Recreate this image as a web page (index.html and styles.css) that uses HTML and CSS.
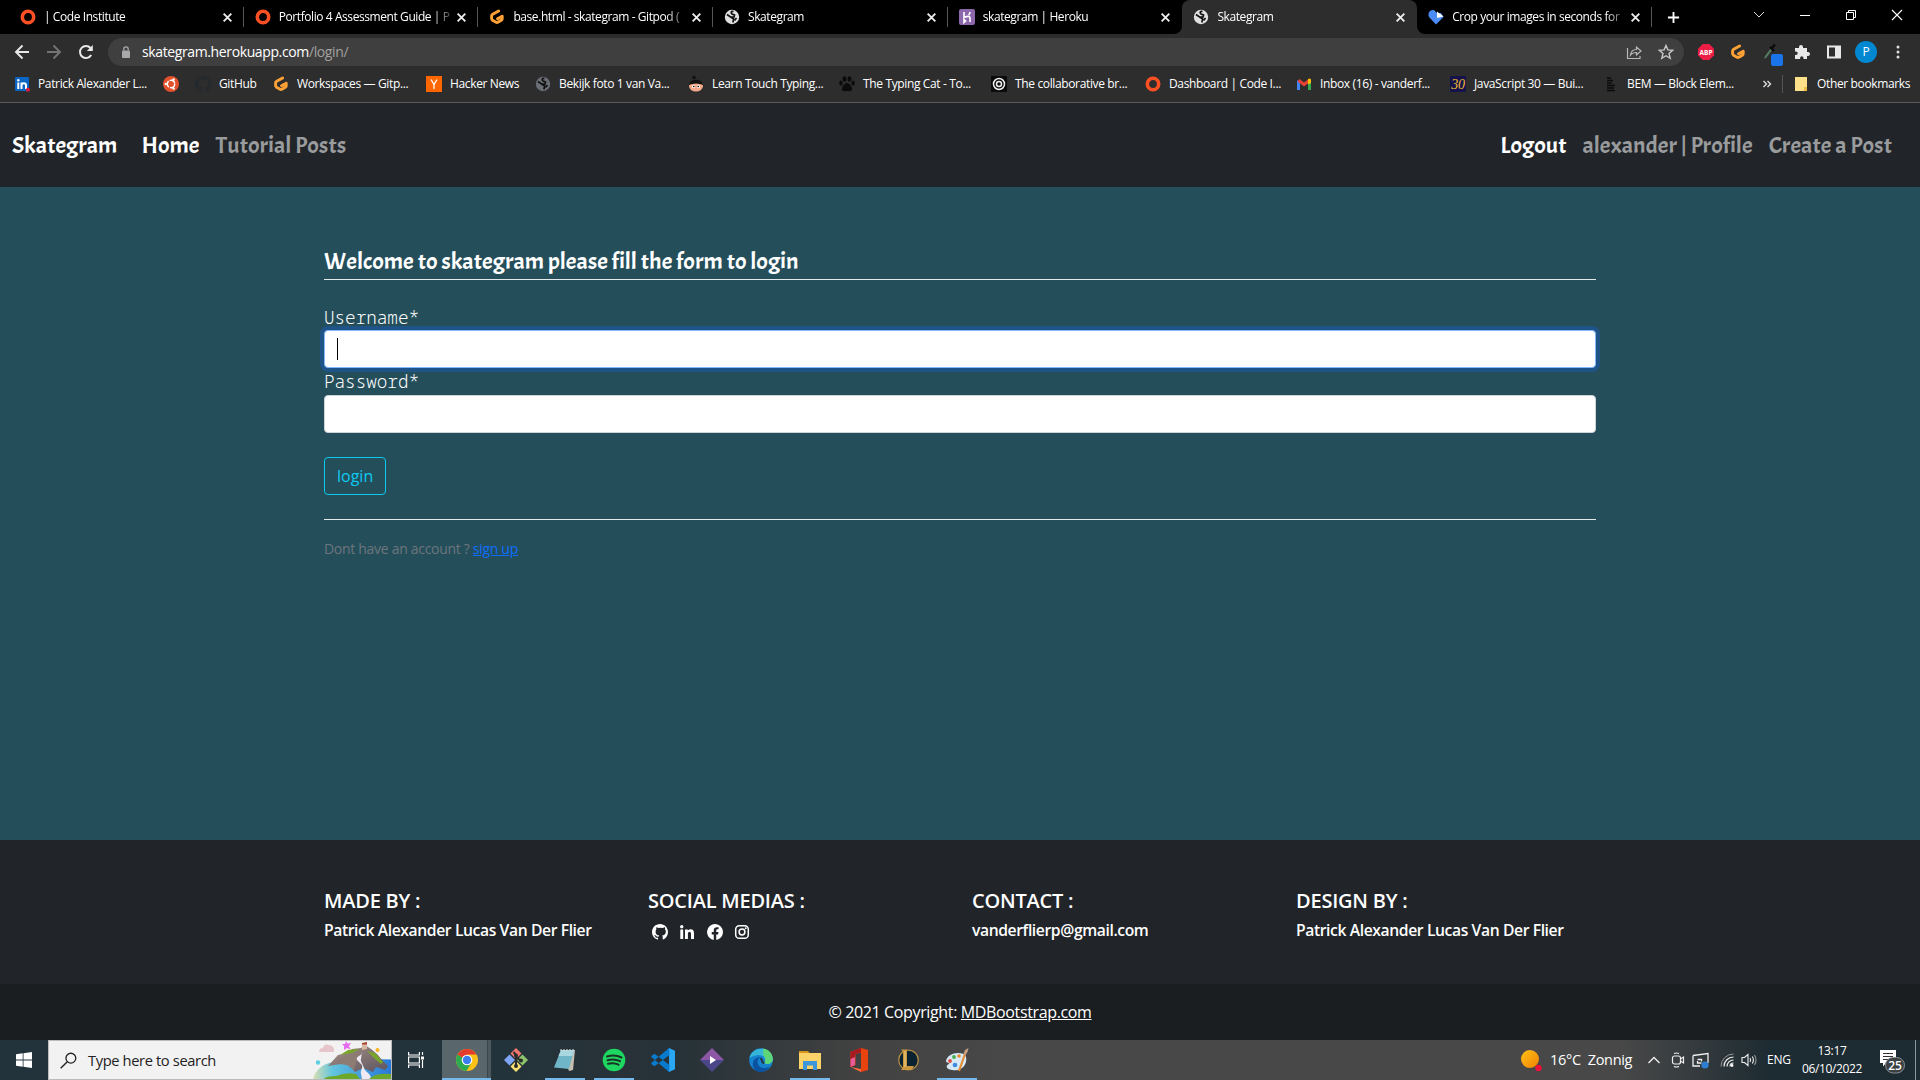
FILE: index.html
```html
<!DOCTYPE html>
<html lang="en">
<head>
<meta charset="utf-8">
<title>Skategram</title>
<link rel="stylesheet" href="styles.css">
</head>
<body>
<svg class="sprite" aria-hidden="true">
  <symbol id="ring" viewBox="0 0 16 16"><ellipse cx="8" cy="8" rx="5.7" ry="5.8" fill="none" stroke="#ff5024" stroke-width="3.6"/></symbol>
  <symbol id="gitpod" viewBox="0 0 16 16"><path d="M9.6 1.900 3.700 5.200Q2.600 5.900 2.600 7v2.600q0 1 .9 1.600l3.600 2.100q.9.500 1.800 0l3.400-2q.9-.5.9-1.600V7.200L8.600 9.800" fill="none" stroke="#ffa236" stroke-width="2.900" stroke-linecap="round" stroke-linejoin="round"/></symbol>
  <symbol id="globe" viewBox="0 0 16 16"><circle cx="8" cy="8" r="7.200" fill="currentColor"/><path d="M9.500 2.500C7 2 6.500 4 8 5l2.500 1-.5 2H6.500L3 5.500M6.500 8l3 1.800-.5 3.700M12.500 9l-2 2.500" fill="none" stroke="#111" stroke-width="1.700"/></symbol>
  <symbol id="heroku" viewBox="0 0 16 16"><rect width="16" height="16" rx="2" fill="#8d67ab"/><path d="M5 3v5.500q6-2.500 6 .5v4M11 3q0 1.500-1.300 3M5 10.500v3l1.600-1.500z" fill="none" stroke="#fff" stroke-width="1.600"/></symbol>
  <symbol id="close" viewBox="0 0 10 10"><path d="m1.500 1.500 7 7m0-7-7 7" stroke="currentColor" stroke-width="1.700"/></symbol>
  <symbol id="office" viewBox="0 0 24 24"><path d="m14 0-10.500 4v15l5-2V6l5.500-1.500V24l7-2V2z" fill="#e8430f"/><path d="M14 0 3.500 4v15l4.500-1.800V6.500L14 4z" fill="#a81a20"/><path d="m3.500 19 10.500 2v3z" fill="#ff6a38"/><path d="m3.500 11 4.500-2v8l-4.500 2z" fill="#e75b96"/></symbol>
</svg>

<header class="browser">
  <div class="tabs">
    <div class="tab"><svg class="ico"><use href="#ring"/></svg><span>| Code Institute</span><svg class="x"><use href="#close"/></svg></div>
    <div class="tab"><svg class="ico"><use href="#ring"/></svg><span>Portfolio 4 Assessment Guide | P</span><svg class="x"><use href="#close"/></svg></div>
    <div class="tab"><svg class="ico"><use href="#gitpod"/></svg><span>base.html - skategram - Gitpod (</span><svg class="x"><use href="#close"/></svg></div>
    <div class="tab"><svg class="ico light"><use href="#globe"/></svg><span>Skategram</span><svg class="x"><use href="#close"/></svg></div>
    <div class="tab before"><svg class="ico"><use href="#heroku"/></svg><span>skategram | Heroku</span><svg class="x"><use href="#close"/></svg></div>
    <div class="tab active"><svg class="ico light"><use href="#globe"/></svg><span>Skategram</span><svg class="x"><use href="#close"/></svg></div>
    <div class="tab after"><svg class="ico" viewBox="0 0 16 16"><path d="M8 15.500 1.200 8.200C-1 5 2-.5 6.500 1.500L9 4h4l2.500 4z" fill="#4a8bf5"/><path d="M9 2.500V9l6.500-1.500z" fill="#fff"/></svg><span>Crop your images in seconds for</span><svg class="x"><use href="#close"/></svg></div>
    <svg class="plus" viewBox="0 0 14 14"><path d="M7 1v12M1 7h12" stroke="#fff" stroke-width="2"/></svg>
    <div class="win">
      <svg viewBox="0 0 12 12"><path d="m1 3 5 5 5-5" fill="none" stroke="#ddd"/></svg>
      <svg viewBox="0 0 12 12"><path d="M1 6.500h10" stroke="#fff"/></svg>
      <svg viewBox="0 0 12 12"><path d="M1.500 3.500h7v7h-7zM3.500 3V1.500h7v7H9" fill="none" stroke="#fff"/></svg>
      <svg viewBox="0 0 12 12"><path d="m1 1 10 10m0-10L1 11" stroke="#fff" stroke-width="1.100"/></svg>
    </div>
  </div>

  <div class="toolbar">
    <svg class="nav-ico" viewBox="0 0 16 16"><path d="M15 8H2m6.500-6.500L2 8l6.500 6.500" fill="none" stroke="#e8e8e8" stroke-width="1.900"/></svg>
    <svg class="nav-ico" viewBox="0 0 16 16"><path d="M1 8h13M7.500 1.500 14 8l-6.500 6.500" fill="none" stroke="#747474" stroke-width="1.900"/></svg>
    <svg class="nav-ico" viewBox="0 0 16 16"><path d="M13.200 11A6 6 0 1 1 12.500 4" fill="none" stroke="#e8e8e8" stroke-width="2"/><path d="M14.800 1v6h-6z" fill="#e8e8e8"/></svg>
    <div class="omnibox">
      <svg class="lock" viewBox="0 0 10 14"><rect x="1" y="5" width="8" height="7.500" rx="1" fill="#a8a8ac"/><path d="M2.800 5V3.500a2.200 2.200 0 0 1 4.400 0V5" fill="none" stroke="#a8a8ac" stroke-width="1.300"/></svg>
      <span class="url">skategram.herokuapp.com<i>/login/</i></span>
      <svg class="act" viewBox="0 0 16 16"><path d="M1.500 4v10.500H14V12M4.500 11c.5-4 2.500-5.500 6-5.500V3L15 7l-4.500 4V8.500c-3 0-4.500.5-6 2.500z" fill="none" stroke="#b8b8b8" stroke-width="1.200"/></svg>
      <svg class="act" viewBox="0 0 16 16"><path d="m8 1.500 1.900 4.400 4.800.4L11 9.500l1.200 4.800L8 11.700l-4.200 2.600L5 9.500 1.300 6.300l4.800-.4z" fill="none" stroke="#c8c8c8" stroke-width="1.400"/></svg>
    </div>
    <div class="exts">
      <svg viewBox="0 0 16 16"><path d="M4.700 0h6.600L16 4.700v6.600L11.300 16H4.700L0 11.300V4.700z" fill="#ed1e45"/><text x="8" y="10.800" class="abp">ABP</text></svg>
      <svg viewBox="0 0 16 16"><use href="#gitpod"/></svg>
      <svg viewBox="0 0 16 16" class="picker"><path d="m2 15 1-3 6-8 1.500 1.500-6 8z" fill="#527a62"/><path d="m8 3 4 4M9.500 4.500l3.500-4" stroke="#080808" stroke-width="2.300"/><rect x="9" y="10" width="12" height="12" rx="2" fill="#1a73e8"/></svg>
      <svg viewBox="0 0 16 16"><path d="M1 4h4V3a2 2 0 0 1 4 0v1h4v4h1a2 2 0 0 1 0 4h-1v3H9.500v-1a1.700 1.700 0 0 0-3.400 0v1H1v-4h1a1.700 1.700 0 0 0 0-3.400H1z" fill="#e8e8e8"/></svg>
      <svg viewBox="0 0 16 16"><path d="M2 2.500h12v11H2z" fill="none" stroke="#e8e8e8" stroke-width="2"/><path d="M9 2.500h5v11H9z" fill="#e8e8e8"/></svg>
      <span class="avatar">P</span>
      <svg viewBox="0 0 16 16" fill="#e0e0e0"><circle cx="8" cy="3" r="1.500"/><circle cx="8" cy="8" r="1.500"/><circle cx="8" cy="13" r="1.500"/></svg>
    </div>
  </div>

  <div class="bookmarks">
    <a><svg class="ico" viewBox="0 0 16 16"><rect x="1" y="1" width="14" height="14" rx="1" fill="#0a66c2"/><path d="M4.300 6.500V13M7.500 13V6.500M7.500 9.500c0-3 4.500-3 4.500 0V13" fill="none" stroke="#fff" stroke-width="2"/><circle cx="4.300" cy="4.200" r="1.200" fill="#fff"/><circle cx="14" cy="13.800" r="2" fill="#e5163a"/></svg><span>Patrick Alexander L...</span></a>
    <a><svg class="ico" viewBox="0 0 16 16"><circle cx="8" cy="8" r="8" fill="#e2502c"/><circle cx="8" cy="8" r="3.700" fill="none" stroke="#fff" stroke-width="1.500" stroke-dasharray="6.700 1.050"/><g fill="#fff"><circle cx="2.800" cy="8" r="1.200"/><circle cx="10.600" cy="3.500" r="1.200"/><circle cx="10.600" cy="12.500" r="1.200"/></g></svg></a>
    <a><svg class="ico" viewBox="0 0 16 16"><path fill="#24292e" d="M8 0C3.580 0 0 3.580 0 8c0 3.540 2.290 6.530 5.470 7.590.4.070.55-.17.55-.38v-1.490c-2.010.37-2.690-.49-2.690-.94-.36-.92-.84-1.200-.84-1.200-.68-.7.300-.6.300-.6.8.100 1.200.8 1.200.8.870 1.230 2.230.87 2.730.66.070-.520.280-.870.510-1.070-1.780-.2-3.640-.89-3.640-3.950 0-.870.310-1.590.820-2.150-.080-.200-.360-1.020.080-2.120 0 0 .670-.210 2.200.820a7.700 7.700 0 0 1 4 0c1.530-1.040 2.200-.820 2.200-.820.440 1.100.160 1.920.080 2.120.510.560.820 1.270.820 2.150 0 3.070-1.870 3.750-3.650 3.950.290.250.540.730.540 1.480v2.190c0 .210.150.460.550.380A8 8 0 0 0 16 8c0-4.420-3.580-8-8-8z"/></svg><span>GitHub</span></a>
    <a><svg class="ico"><use href="#gitpod"/></svg><span>Workspaces — Gitp...</span></a>
    <a><svg class="ico" viewBox="0 0 16 16"><path fill="#ff6600" d="M0 0h16v16H0z"/><path d="m5 3.500 3 5 3-5M8 8.500V13" fill="none" stroke="#fff" stroke-width="1.300"/></svg><span>Hacker News</span></a>
    <a><svg class="ico dim"><use href="#globe"/></svg><span>Bekijk foto 1 van Va...</span></a>
    <a><svg class="ico" viewBox="0 0 16 16"><circle cx="6" cy="1.500" r="1.700" fill="#111"/><ellipse cx="8" cy="10" rx="7" ry="5.500" fill="#f4a98c"/><path d="M.8 9C2 2 14 2 15.200 9q-7-3-14.400 0z" fill="#111"/><circle cx="5.500" cy="10.500" r="1.500" fill="#fff"/><circle cx="10.500" cy="10.500" r="1.500" fill="#fff"/><circle cx="5.800" cy="10.500" r=".8"/><circle cx="10.200" cy="10.500" r=".8"/></svg><span>Learn Touch Typing...</span></a>
    <a><svg class="ico" viewBox="0 0 16 16" fill="#0b0b0b"><path d="M8 7c2.500 0 5.500 4 5 6.500S9.500 15 8 15s-4.500 1-5-1.500S5.500 7 8 7z"/><ellipse cx="5.500" cy="3" rx="1.900" ry="2.800"/><ellipse cx="10.500" cy="3" rx="1.900" ry="2.800"/><ellipse cx="1.900" cy="7" rx="1.700" ry="2.500"/><ellipse cx="14.100" cy="7" rx="1.700" ry="2.500"/></svg><span>The Typing Cat - To...</span></a>
    <a><svg class="ico" viewBox="0 0 16 16"><path d="M0 0h16v16H0z" fill="#0a0a0a"/><g fill="none" stroke="#eee" stroke-width="1.500"><circle cx="8" cy="8" r="5.500"/><circle cx="8" cy="8" r="2.500"/></g></svg><span>The collaborative br...</span></a>
    <a><svg class="ico"><use href="#ring"/></svg><span>Dashboard | Code I...</span></a>
    <a><svg class="ico" viewBox="0 0 16 16"><path d="M2.500 14V4.500" stroke="#4285f4" stroke-width="3"/><path d="M13.500 14V4.500" stroke="#34a853" stroke-width="3"/><path d="M2.500 4.200 8 8.500l5.500-4.300" fill="none" stroke="#ea4335" stroke-width="3"/><path d="M12 3q3-1.500 3 1v3l-3 1.500z" fill="#fbbc04"/></svg><span>Inbox (16) - vanderf...</span></a>
    <a><svg class="ico" viewBox="0 0 16 16"><path d="M0 0h16v16H0z" fill="#14144a"/><text x="8" y="13" class="js30">30</text></svg><span>JavaScript 30 — Bui...</span></a>
    <a><svg class="ico" viewBox="0 0 16 16"><path d="M4 2h4M4 4.500h6M4 7h5M4 9.500h8M4 12h7M4 14.500h8" stroke="#0b0b0b" stroke-width="1.500"/></svg><span>BEM — Block Elem...</span></a>
    <svg class="more" viewBox="0 0 10 10"><path d="m1.500 2 3 3-3 3m4-6 3 3-3 3" fill="none" stroke="#ddd" stroke-width="1.400"/></svg>
    <a class="other"><svg class="ico" viewBox="0 0 16 16"><path d="M2 1h12v14H2z" fill="#ffe08a"/><path d="M11 11h3v4h-3z" fill="#e9bd45"/></svg><span>Other bookmarks</span></a>
  </div>
</header>

<nav class="navbar">
  <a class="on brand">Skategram</a>
  <a class="on">Home</a>
  <a>Tutorial Posts</a>
  <a class="on right">Logout</a>
  <a>alexander | Profile</a>
  <a>Create a Post</a>
</nav>

<main class="page">
  <div class="form">
    <h2>Welcome to skategram please fill the form to login</h2>
    <label>Username*</label>
    <div class="input focus"><b></b></div>
    <label class="pw">Password*</label>
    <div class="input"></div>
    <a class="btn">login</a>
    <hr>
    <small>Dont have an account ? <a>sign up</a></small>
  </div>
</main>

<footer class="footer">
  <div><h5>MADE BY :</h5><p>Patrick Alexander Lucas Van Der Flier</p></div>
  <div><h5>SOCIAL MEDIAS :</h5>
    <p class="social">
      <svg viewBox="0 0 16 16"><path d="M8 0C3.580 0 0 3.580 0 8c0 3.540 2.290 6.530 5.470 7.590.4.070.55-.17.55-.38v-1.490c-2.010.37-2.690-.49-2.690-.94-.36-.92-.84-1.200-.84-1.200-.68-.7.300-.6.300-.6.8.100 1.200.8 1.200.8.870 1.230 2.230.87 2.730.66.070-.520.280-.870.510-1.070-1.780-.2-3.640-.89-3.640-3.950 0-.870.310-1.590.820-2.150-.080-.200-.360-1.020.080-2.120 0 0 .670-.210 2.200.820a7.700 7.700 0 0 1 4 0c1.530-1.040 2.200-.820 2.200-.820.440 1.100.160 1.920.080 2.120.510.560.820 1.270.820 2.150 0 3.070-1.870 3.750-3.650 3.950.290.250.540.730.540 1.480v2.190c0 .210.150.460.550.380A8 8 0 0 0 16 8c0-4.420-3.580-8-8-8z"/></svg>
      <svg viewBox="0 0 16 16"><path d="M1.300 5.500h2.900V15H1.300zM6 5.500h2.800v1.300C10.300 4.500 15 4.600 15 9v6h-3V9.800c0-3-3.100-2.700-3.100 0V15H6z"/><circle cx="2.750" cy="2.700" r="1.700"/></svg>
      <svg viewBox="0 0 16 16"><path d="M16 8.050A8 8 0 1 0 6.750 16v-5.620H4.720V8.050h2.030V6.280c0-2.020 1.200-3.130 3.020-3.130.88 0 1.790.16 1.790.16v1.980h-1c-1 0-1.310.62-1.310 1.260v1.500h2.220l-.36 2.330H9.250V16A8 8 0 0 0 16 8.050z"/></svg>
      <svg viewBox="0 0 16 16"><rect x="1.700" y="1.700" width="12.600" height="12.600" rx="3.600" fill="none" stroke="#fff" stroke-width="1.500"/><circle cx="8" cy="8" r="2.900" fill="none" stroke="#fff" stroke-width="1.500"/><circle cx="11.700" cy="4.300" r=".95"/></svg>
    </p></div>
  <div><h5>CONTACT :</h5><p>vanderflierp@gmail.com</p></div>
  <div><h5>DESIGN BY :</h5><p>Patrick Alexander Lucas Van Der Flier</p></div>
</footer>
<div class="copyright">© 2021 Copyright:&nbsp;<a>MDBootstrap.com</a></div>

<div class="taskbar">
  <div class="start"><svg viewBox="0 0 16 16" fill="#fff"><path d="M0 2.300 6.700 1.300v6.300H0zM7.500 1.200 16 0v7.600H7.500zM0 8.400h6.700v6.300L0 13.700zM7.500 8.400H16V16l-8.500-1.200z"/></svg></div>
  <div class="search">
    <svg class="glass" viewBox="0 0 18 18"><circle cx="11.500" cy="6.500" r="5.200" fill="none" stroke="#222" stroke-width="1.400"/><path d="m7.700 10.300-7 7" stroke="#222" stroke-width="1.500"/></svg>
    <span>Type here to search</span>
    <svg class="island" viewBox="0 0 78 38">
      <defs><linearGradient id="sea" x2="1"><stop stop-color="#d8dfb0"/><stop offset=".25" stop-color="#62c5df"/><stop offset="1" stop-color="#2878d8"/></linearGradient><linearGradient id="rock" y2="1"><stop stop-color="#a89488"/><stop offset="1" stop-color="#5d535f"/></linearGradient></defs>
      <path d="M0 38Q4 24 20 21L56 18l22 .5V38z" fill="url(#sea)"/>
      <path d="M15 25 25 14l10-2 4-4 9-1 4-3 6 4 6 5 5 6 6 6-3 4-9-3-3 5-10-4-8 4-8-9-6 1z" fill="url(#rock)"/>
      <path d="m36 13 9-4 3 6-5 6-2 8-7-5-8-1z" fill="#8d7c74"/>
      <path d="m27 14 8-5 12-1-8 4-6 1zM54 10l8 2 8 9-2 2-6-5z" fill="#7aa52a"/>
      <path d="M49 11c2 3-7 4-5 8l5 5c1 4-2 5-1 9l1 5h9c0-6-6-7-7-11s-4-7-3-9z" fill="#eee9f4"/>
      <path d="M11 38q2-3 12-3 10-4 20-2l4 5zM56 38q6-6 22-5v5z" fill="#6da82a"/>
      <path d="M49 2.500h5V8l-5 1z" fill="#d9b9a6"/><path d="M49 3.500V2l5-1v2.500z" fill="#a8432f"/>
      <path d="M6 11q0-4 4-4 1-5 6-3 6 1 5 7z" fill="#e6c6ca"/>
      <path d="m33 0 1.500 2.500L38 2l-2 3 1.500 3.500-3.500-1.500-3 2V5l-2-2h3z" fill="#e66bee"/>
      <circle cx="64.500" cy="9" r="2" fill="#ffb31c"/><circle cx="5" cy="21.500" r="2.200" fill="#5fd0e4"/>
    </svg>
  </div>
  <div class="view"><svg viewBox="0 0 16 16" fill="none" stroke="#fff" stroke-width="1.200"><path d="M.6 0v3h10.800V0M.6 16v-3h10.800v3M.6 5h10.800v6H.6zM14.500 0v3M14.500 8v8"/><path d="M13 4.500h3v3h-3z" fill="#fff" stroke="none"/></svg></div>
  <div class="apps">
    <div class="app current"><svg viewBox="0 0 24 24"><circle cx="12" cy="12" r="11" fill="#fbc116"/><path d="M2.500 6.500A11 11 0 0 0 11.500 23l5-8.500L12 12z" fill="#2da94f"/><path d="M2.500 6.500A11 11 0 0 1 21.500 6.500H12v6z" fill="#e33b2e"/><circle cx="12" cy="12" r="5.300" fill="#fff"/><circle cx="12" cy="12" r="4.200" fill="#3b7ded"/></svg></div>
    <div class="app"><svg viewBox="0 0 24 24"><path d="m12 0 5.500 5.500L12 11 6.500 5.500z" fill="#f1766d"/><path d="m5.500 6.500 5.500 5.500-5.500 5.500L0 12z" fill="#7ea6f4"/><path d="M18.500 6.500 24 12l-5.500 5.500L13 12z" fill="#8dc56c"/><path d="m12 13 5.500 5.500L12 24l-5.500-5.500z" fill="#fbe174"/><path d="M9.500 4 12 7v11M12 9l5 4" fill="none" stroke="#2b2b2b" stroke-width="2"/><circle cx="12" cy="7.500" r="2" fill="#2b2b2b"/><circle cx="12" cy="18" r="2" fill="#2b2b2b"/><circle cx="17" cy="12.500" r="2" fill="#2b2b2b"/></svg></div>
    <div class="app open"><svg viewBox="0 0 24 24"><path d="M8 2h14l-2 20-4 1z" fill="#c6bfb0"/><path d="M8 2h13l-5 19L1 19.500z" fill="#6fb6c9"/><path d="M8 2h13l-1.500 6H5.500z" fill="#a9d7df"/><path d="M8 1v2m3-2v2m3-2v2m3-2v2m3-2v2" stroke="#ddd"/></svg></div>
    <div class="app open"><svg viewBox="0 0 24 24"><circle cx="12" cy="12" r="11.300" fill="#1ed760"/><path d="M5 8.500q8-2.500 14.500 1M5.500 12.200q7-2 12.500 1M6 15.700q6-1.500 10.500 1" fill="none" stroke="#1b3226" stroke-width="2" stroke-linecap="round"/></svg></div>
    <div class="app"><svg viewBox="0 0 24 24"><path d="m18 0 6 2.800v18.400L18 24z" fill="#2aa7f2"/><path d="m18 0 .5 7L3.500 18.300.3 16v-1zM18 24l.5-7L3.500 5.700.3 8v1z" fill="#0a7acc"/></svg></div>
    <div class="app"><svg viewBox="0 0 24 24"><path d="m12 0 12 12H0z" fill="#8c57a5"/><path d="m12 24 12-12H0z" fill="#4a4687"/><path d="m10 8 6 4-6 4z" fill="#fff"/></svg></div>
    <div class="app"><svg viewBox="0 0 24 24"><circle cx="12" cy="12" r="11.800" fill="#1582cf"/><path d="M.5 10C3-2 22-3 23.800 11c.2 5-6 6-8.500 4 3-5-3-12-14.800-5z" fill="#35b5d8"/><path d="M14 .5c6 .5 10 6 9.800 10.500 0 5-6 6-8.500 4 3-5-1-8-1-8z" fill="#5ed678"/><path d="M9 12c-2 6 5 11 12 6-4 8-15 8-17 0-1-5 2-9 8-9-2 1-3 2-3 3z" fill="#0b53a1"/><path d="M15.300 15c-4-1-1-4-4-4.500" stroke="#263238" stroke-width="2" fill="none"/></svg></div>
    <div class="app open"><svg viewBox="0 0 24 24"><path d="M1 3h9l2 2.500H1z" fill="#d9961a"/><path d="M1 5h22v16H1z" fill="#fbd368"/><path d="M5 13h14v9h-4v-4.500H9V22H5z" fill="#3d95dc"/></svg></div>
    <div class="app"><svg><use href="#office"/></svg></div>
    <div class="app"><svg viewBox="0 0 24 24"><circle cx="12.500" cy="12" r="9.800" fill="#0b2330" stroke="#b08a45" stroke-width="1.300"/><path d="M5 1.500h6V18h7l-2.500 4H5l2-2.500V4z" fill="#c9973f"/><path d="M9 3v16" stroke="#f1d38a"/></svg></div>
    <div class="app open"><svg viewBox="0 0 24 24"><path d="M13 5c8 0 9 4 8 9-2 7-8 9-14 8-7-1-6-5-3-6 2-1-3-1-3-3C2 8 7 5 13 5z" fill="#d7e9f4"/><circle cx="5" cy="13" r="1.900" fill="#e0483f"/><circle cx="9" cy="9" r="1.900" fill="#44b04b"/><circle cx="14" cy="8" r="1.800" fill="#e88a2d"/><circle cx="10" cy="17" r="2.300" fill="#3d8ae0"/><path d="m14 23 6-17" stroke="#e38e35" stroke-width="2.200"/><path d="m18.500 6 1.500-4 3.500-2-1 4-2 3z" fill="#c6a083"/></svg></div>
  </div>
  <div class="tray">
    <svg class="sun" viewBox="0 0 22 22"><defs><linearGradient id="sg" y2="1"><stop stop-color="#ffc21a"/><stop offset="1" stop-color="#f08000"/></linearGradient></defs><circle cx="9" cy="10" r="9" fill="url(#sg)"/><circle cx="17.500" cy="19" r="3.200" fill="#e81238"/></svg>
    <span class="temp">16°C&nbsp; Zonnig</span>
    <svg class="t1" viewBox="0 0 14 14"><path d="m1.500 10 5.500-5.500 5.500 5.500" fill="none" stroke="#eee" stroke-width="1.400"/></svg>
    <svg class="t2" viewBox="0 0 14 16" fill="none" stroke="#eee" stroke-width="1.200"><rect x="1.500" y="4" width="8" height="8" rx="2"/><path d="m9.500 7 3-2v6l-3-2M3 1.500q2.500-1 5 0M3 14.500q2.500 1 5 0"/></svg>
    <svg class="t3" viewBox="0 0 18 17"><path d="m1 3.500 15-2V11M1 3.500V14h7M5.500 7.500h4v2M9.500 11h-4V9" fill="none" stroke="#eee" stroke-width="1.300"/><circle cx="13" cy="13" r="3.600" fill="#2f7fd0"/></svg>
    <svg class="t4" viewBox="0 0 14 14" fill="none"><path d="M1 13.500A12.500 12.500 0 0 1 13.500 1" stroke="#999"/><path d="M4 13.500A9.500 9.500 0 0 1 13.500 4M7 13.500A6.500 6.500 0 0 1 13.500 7M10 13.500a3.500 3.500 0 0 1 3.500-3.500" stroke="#eee" stroke-width="1.200"/><circle cx="12" cy="12.500" r="1.400" fill="#fff"/></svg>
    <svg class="t5" viewBox="0 0 16 14" fill="none" stroke="#eee" stroke-width="1.100"><path d="M1 4.500h2.500L7 1.500v11l-3.500-3H1zM9 5q1.200 2 0 4M11.300 3.500q2.200 3.500 0 7"/><path d="M13.500 2q3 5 0 10" stroke="#999"/></svg>
    <span class="lang">ENG</span>
    <span class="clock">13:17<br>06/10/2022</span>
    <svg class="note" viewBox="0 0 28 26"><path d="M1 1h16v13H7l-3 3.500V14H1z" fill="#fff"/><path d="M4 4.500h10M4 7.500h10M4 10.500h6" stroke="#333" stroke-width="1.200"/><rect x="6.500" y="8.500" width="19" height="15.500" rx="7.700" fill="#3c4144" stroke="#8a8f92"/><text x="16" y="20.500" class="badge">25</text></svg>
    <i class="edge"></i>
  </div>
</div>
</body>
</html>
```
FILE: styles.css
```css
* { box-sizing: border-box; }
body {
  margin: 0; width: 1920px; height: 1080px; overflow: hidden;
  display: flex; flex-direction: column; background: #254e5b; color: #fff;
  font-family: "Open Sans", "Noto Sans", sans-serif;
}
svg { display: block; flex: none; overflow: visible; }
p, h2, h5 { margin: 0; }
.sprite { display: none; }
.ico { width: 16px; height: 16px; }

/* browser chrome */
.browser { height: 103px; flex: none; background: #2d2d2d; border-bottom: 1px solid #5a5a5a; font-size: 12px; letter-spacing: -.36px; }
.tabs { height: 34px; background: #000; display: flex; align-items: center; padding-left: 9px; }
.tab {
  width: 234.700px; height: 34px; display: flex; align-items: center; flex: none;
  padding: 0 11px 0 11px; background: linear-gradient(#555, #555) right center / 1px 20px no-repeat;
}
.tab span {
  width: 178px; margin-left: 8px; overflow: hidden; white-space: nowrap; letter-spacing: -.42px;
  -webkit-mask: linear-gradient(90deg, #000 153px, transparent 178px); line-height: 20px;
}
.tab .x { width: 11px; height: 11px; color: #eee; }
.light { color: #e0e0e0; }
.dim { color: #6b6f75; }
.tab.before { background: none; }
.tab.active { background: #2d2d2d; border-radius: 8px 8px 0 0; box-shadow: 0 14px 0 0 #2d2d2d; }
.tab.before, .tab.after { background-color: #000; z-index: 1; }
.tab.before { border-radius: 0 0 8px 0; }
.tab.after { border-radius: 0 0 0 8px; }
.tabs:has(.active) { background: linear-gradient(90deg, #000 1150px, #2d2d2d 1150px 1450px, #000 1450px) 0 22px / 100% 12px no-repeat #000; }
.plus { width: 13px; height: 13px; margin-left: 15px; }
.win { margin-left: auto; display: flex; gap: 34px; padding-right: 17px; margin-top: -5px; }
.win svg { width: 12px; height: 12px; }

.toolbar { height: 36px; display: flex; align-items: center; padding-left: 14px; }
.nav-ico { width: 16px; height: 16px; margin-right: 16px; }
.omnibox {
  width: 1576px; height: 28px; margin-left: -2px; margin-right: 14px; border-radius: 14px; background: #3f3f3f;
  display: flex; align-items: center; padding: 0 10px 0 13px; font-size: 14px;
}
.lock { width: 10px; height: 15px; }
.url { margin: 0 auto 0 11px; line-height: 20px; letter-spacing: -.38px; }
.url i { font-style: normal; color: #a0a0a0; }
.act { width: 16px; height: 16px; margin-left: 16px; }
.exts { display: flex; align-items: center; gap: 16px; }
.exts svg { width: 16px; height: 16px; }
.abp { font: 700 6.500px "Open Sans", sans-serif; fill: #fff; text-anchor: middle; letter-spacing: 0; }
.avatar {
  width: 22px; height: 22px; margin: 0 -3px; border-radius: 50%; background: #0288d1;
  text-align: center; line-height: 22px; font-size: 12px;
}

.bookmarks {
  height: 28px; padding-left: 14px; display: grid; align-items: center;
  grid-template-columns: 149px 32px 78px 153px 109px 153px 151px 152px 154px 151px 154px 153px 154px 33px auto;
}
.bookmarks a { display: flex; align-items: center; gap: 8px; white-space: nowrap; line-height: 18px; }
.more { width: 10px; height: 12px; margin-left: 5px; }
.js30 { font: italic 14px "Liberation Serif", serif; fill: #f2b632; text-anchor: middle; }
.bookmarks a.other { border-left: 1px solid #555; padding-left: 10px; margin-left: -8px; height: 18px; }

/* site navigation */
.navbar {
  height: 84px; flex: none; background: #212529; display: flex; align-items: center; gap: 16px;
  padding: 0 28px 0 12px; font: 24px/36px Acme, sans-serif; color: #999b9d;
}
.navbar .on { color: #fff; }
.navbar .brand { margin-right: 8px; }
.navbar .right { margin-left: auto; }

/* login form */
.page { height: 653px; flex: none; display: flex; justify-content: center; }
.form { width: 1272px; padding-top: 60px; display: flex; flex-direction: column; align-items: flex-start; }
h2 { width: 100%; height: 33px; border-bottom: 1px solid #e4eaec; font: 24px/29px Acme, sans-serif; }
label { margin-top: 24px; height: 26px; font: 17.600px/26px "Noto Sans Mono", monospace; font-weight: 350; }
.pw { margin-top: 0; height: 27px; }
.input { width: 100%; height: 38px; background: #fff; border: 1px solid #ced4da; border-radius: 4px; padding: 7px 12px; }
.focus { border-color: #86b7fe; box-shadow: 0 0 0 4px #1e5487; }
.input b { display: block; width: 1px; height: 22px; background: #000; }
.btn { margin-top: 24px; height: 38px; padding: 0 12px; border: 1px solid #0dcaf0; border-radius: 4px; color: #0dcaf0; font-size: 16px; line-height: 36px; }
hr { width: 100%; height: 1px; margin: 24px 0 18px; border: 0; background: #e4eaec; }
small { font-size: 14px; line-height: 21px; color: #6c757d; letter-spacing: -.3px; }
small a { color: #0d6efd; text-decoration: underline; }

/* footer */
.footer {
  height: 144px; flex: none; background: #212529; padding: 49px 300px 0 324px;
  display: grid; grid-template-columns: repeat(4, 324px);
}
h5 { font-size: 20px; font-weight: 600; line-height: 24px; margin-bottom: 8px; letter-spacing: -.22px; }
.footer p { font-size: 15.700px; font-weight: 600; line-height: 19px; letter-spacing: -.4px; }
.footer .social { display: flex; gap: 11.300px; padding: 3px 0 0 4px; }
.social svg { width: 16px; height: 16px; fill: #fff; }
.copyright {
  height: 56px; flex: none; background: #1a1e21; display: flex; justify-content: center; align-items: center;
  font-size: 16px; letter-spacing: -.36px;
}
.copyright a { text-decoration: underline; }

/* desktop taskbar */
.taskbar {
  height: 40px; flex: none; display: flex; align-items: center;
  background: linear-gradient(90deg, #22333b 0, #22333b 480px, #283238 620px, #263238 680px, #414141 850px, #484848 1000px, #484848 1620px, #333a3d 1700px, #1d2b32 1770px);
}
.start { width: 48px; padding-left: 16px; }
.start svg, .view svg { width: 16px; height: 16px; }
.search {
  width: 344px; height: 40px; background: #f2f2f2; border: 1px solid #bbb; color: #222;
  display: flex; align-items: center; font-size: 14.700px; padding-left: 11px; letter-spacing: -.38px;
}
.glass { width: 17px; height: 17px; margin-right: 11px; }
.island { width: 78px; height: 38px; margin-left: auto; }
.view { width: 50px; padding-left: 16px; }
.apps { display: flex; }
.app { width: 49px; height: 40px; display: flex; align-items: center; justify-content: center; }
.app svg { width: 24px; height: 24px; }
.app.open { background: linear-gradient(#76b9ed, #76b9ed) center bottom / 40px 2px no-repeat; }
.app.current { background: linear-gradient(#76b9ed, #76b9ed) 0 bottom / 100% 2px no-repeat, linear-gradient(90deg, #59666b 45px, #39474c 45px 46px, #4b585d 46px); }
.tray { margin-left: auto; display: flex; align-items: center; height: 40px; white-space: nowrap; }
.sun { width: 22px; height: 22px; margin-right: 7px; }
.temp { width: 97px; font-size: 14.500px; line-height: 20px; letter-spacing: -.3px; }
.t1 { width: 14px; height: 14px; margin-right: 10px; }
.t2 { width: 14px; height: 16px; margin-right: 7px; }
.t3 { width: 18px; height: 17px; margin-right: 10px; }
.t4 { width: 14px; height: 14px; margin-right: 7px; }
.t5 { width: 16px; height: 14px; margin-right: 10px; }
.lang { width: 29px; font-size: 12px; line-height: 16px; letter-spacing: -.2px; }
.clock { width: 72px; text-align: center; font-size: 12px; line-height: 18px; letter-spacing: -.35px; }
.note { width: 28px; height: 26px; margin-left: 11px; margin-top: 4px; }
.badge { font: 600 12px "Open Sans", sans-serif; fill: #fff; text-anchor: middle; }
.edge { width: 1px; height: 40px; background: #8a979c; margin: 0 4px 0 8px; }
```
